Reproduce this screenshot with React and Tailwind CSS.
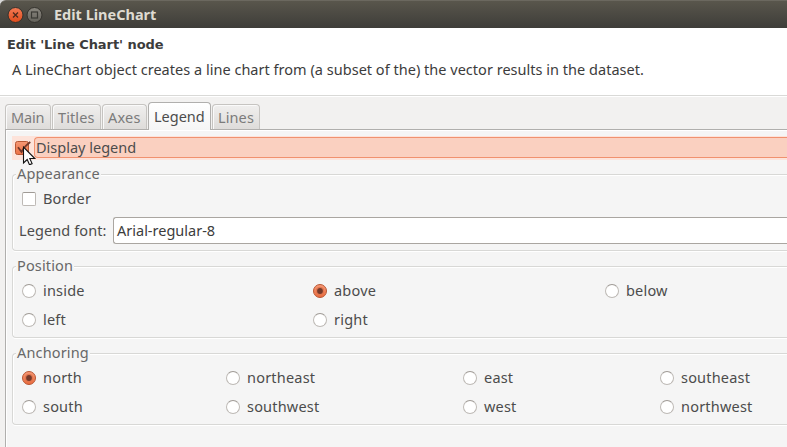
import React from 'react';

const TABS = [
  { name: 'Main', box: 'ml-[5px] w-[46px] tracking-[-0.2px]' },
  { name: 'Titles', box: 'ml-px w-[49px] tracking-[0.1px]' },
  { name: 'Axes', box: 'ml-px w-[45px] tracking-[0.2px]' },
  { name: 'Legend', box: 'ml-px w-[63px]', active: true },
  { name: 'Lines', box: 'ml-px w-[48px] tracking-[0.1px]' },
];

function Radio({ label, checked }) {
  return (
    <label className="flex h-[29px] items-center">
      {checked ? (
        <svg width="14" height="14" viewBox="0 0 14 14" className="shrink-0">
          <defs>
            <linearGradient id="radioFill" x1="0" y1="0" x2="0" y2="1">
              <stop offset="0" stopColor="#f79b79" />
              <stop offset="1" stopColor="#ea6a3c" />
            </linearGradient>
          </defs>
          <circle cx="7" cy="7" r="6.5" fill="url(#radioFill)" stroke="#b75734" />
          <circle cx="7" cy="7" r="3.8" fill="none" stroke="#e0744c" strokeWidth="1" />
          <circle cx="7" cy="7" r="2.9" fill="#74392a" />
        </svg>
      ) : (
        <span className="size-[14px] shrink-0 rounded-full border border-[#bdb9b5] border-t-[#9f9a95] bg-white" />
      )}
      <span className="mb-[2px] ml-[7px] tracking-[0.2px]">{label}</span>
    </label>
  );
}

function Group({ title, className, children }) {
  return (
    <section
      className={`ml-[12px] rounded-l-[4px] border border-r-0 border-[#d8d8d6] shadow-[0_1px_0_#fff,inset_1px_1px_0_#fff] ${className}`}
    >
      <h2 className="relative -mt-[10px] ml-[3px] h-[19px] w-fit bg-[#f5f5f5] pr-px pl-px leading-[16px] tracking-[0.15px] text-[#686868]">
        {title}
      </h2>
      {children}
    </section>
  );
}

export default function App() {
  return (
    <div className="flex h-[447px] w-[787px] flex-col overflow-hidden bg-[#f2f1f0] font-['Noto_Sans','Open_Sans',sans-serif] text-[14.5px] leading-[20px] whitespace-nowrap text-[#4c4c4c]">
      <div className="h-[28px] shrink-0 bg-[#d8d8d8]">
        <header className="flex h-[28px] items-center rounded-tl-[6px] border-t border-[#6b685f] bg-linear-to-b from-[#59564c] to-[#3e3d39] pl-[7px]">
          <svg width="36" height="18" viewBox="0 0 36 18">
            <defs>
              <linearGradient id="close" x1="0" y1="0" x2="0" y2="1">
                <stop offset="0" stopColor="#f47b55" />
                <stop offset="1" stopColor="#df4b1b" />
              </linearGradient>
              <linearGradient id="max" x1="0" y1="0" x2="0" y2="1">
                <stop offset="0" stopColor="#8b8880" />
                <stop offset="1" stopColor="#63615a" />
              </linearGradient>
            </defs>
            <circle cx="8.5" cy="9" r="7.5" fill="url(#close)" stroke="#33312c" />
            <path d="M6 6.5l5 5M11 6.5l-5 5" stroke="#4c2a1d" strokeWidth="1.3" />
            <circle cx="27.5" cy="9" r="7.5" fill="url(#max)" stroke="#33312c" />
            <rect x="24.5" y="6" width="6" height="6" fill="none" stroke="#3a3934" strokeWidth="1.2" />
          </svg>
          <h1 className="mb-[2px] ml-[11px] text-[14.5px] font-bold text-[#dfdbd2]">Edit LineChart</h1>
        </header>
      </div>

      <div className="h-[68px] shrink-0 border-b border-[#d9d9d7] bg-white pt-[7px]">
        <p className="ml-[7px] h-[20px] font-['DejaVu_Sans',sans-serif] text-[13px] leading-[19px] font-bold tracking-[-0.05px] text-[#3c3c3c]">
          Edit 'Line Chart' node
        </p>
        <p className="mt-[4px] ml-[12px] tracking-[0.02px] text-[#3c3c3c]">
          A LineChart object creates a line chart from (a subset of the) the vector results in the dataset.
        </p>
      </div>

      <nav className="relative z-10 flex h-[33px] shrink-0 items-end border-t border-white">
        {TABS.map((t) =>
          t.active ? (
            <div key={t.name} className={`${t.box} -mb-px h-[28px] rounded-t-[4px] border border-b-0 border-[#b0afad] bg-linear-to-b from-white to-[#f5f5f5] pt-[3px] pl-[5px]`}>
              {t.name}
            </div>
          ) : (
            <div key={t.name} className={`${t.box} h-[25px] rounded-t-[4px] border border-b-0 border-[#c6c4c1] bg-linear-to-b from-[#f0efee] to-[#dedcda] pt-[2px] pl-[5px] text-[#7b7b7b] shadow-[inset_1px_1px_0_#fafafa]`}>
              {t.name}
            </div>
          )
        )}
      </nav>

      <main className="ml-[5px] flex flex-1 flex-col border-t border-l border-[#b0afad] bg-[#f5f5f5] pt-[6px] shadow-[inset_1px_1px_0_#fff]">
        <div className="-ml-[6px] flex flex-col">
          <div className="ml-[12px] flex h-[24px] bg-[#fde3da] pt-px pb-[2px]">
            <svg width="22" height="22" viewBox="0 0 22 22" className="shrink-0 overflow-visible">
              <defs>
                <linearGradient id="check" x1="0" y1="0" x2="0" y2="1">
                  <stop offset="0" stopColor="#f69874" />
                  <stop offset="1" stopColor="#ec7145" />
                </linearGradient>
              </defs>
              <rect x="3.5" y="4.5" width="13" height="13" rx="2" fill="url(#check)" stroke="#b75734" />
              <path d="M6 10.2l3.5 4.6C12 10.5 14.5 7.5 18.3 5" fill="none" stroke="#74392a" strokeWidth="1.8" />
              <path d="M11.5 10v16l3.7-3.5 2.3 5.2 2.6-1.1-2.3-5.1h5z" fill="#fff" stroke="#111" strokeWidth="1.1" />
            </svg>
            <div className="flex-1 rounded-l-[4px] border border-r-0 border-[#f0916f] bg-[#fad0c0] pl-px leading-[19px]">
              Display legend
            </div>
          </div>

          <Group title="Appearance" className="mt-[14px] h-[77px]">
            <label className="mt-[5px] ml-[9px] flex h-[20px] items-center">
              <span className="size-[14px] rounded-[2px] border border-[#bdb9b5] border-t-[#9f9a95] bg-white" />
              <span className="mb-[2px] ml-[7px] tracking-[0.2px]">Border</span>
            </label>
            <div className="mt-[8px] flex h-[27px] items-center">
              <span className="mb-[2px] ml-[6px] w-[94px] tracking-[0.1px]">Legend font:</span>
              <div className="h-[27px] flex-1 rounded-l-[3px] border border-r-0 border-[#aaa6a1] bg-white pl-[3px] leading-[25px] text-[#3c3c3c]">
                Arial-regular-8
              </div>
            </div>
          </Group>

          <Group title="Position" className="mt-[15px] h-[72px]">
            <div className="grid grid-cols-[291px_292px_1fr] pl-[9px]">
              <Radio label="inside" />
              <Radio label="above" checked />
              <Radio label="below" />
              <Radio label="left" />
              <Radio label="right" />
            </div>
          </Group>

          <Group title="Anchoring" className="mt-[15px] h-[72px]">
            <div className="grid grid-cols-[204px_237px_197px_1fr] pl-[9px]">
              <Radio label="north" checked />
              <Radio label="northeast" />
              <Radio label="east" />
              <Radio label="southeast" />
              <Radio label="south" />
              <Radio label="southwest" />
              <Radio label="west" />
              <Radio label="northwest" />
            </div>
          </Group>
        </div>
      </main>
    </div>
  );
}
